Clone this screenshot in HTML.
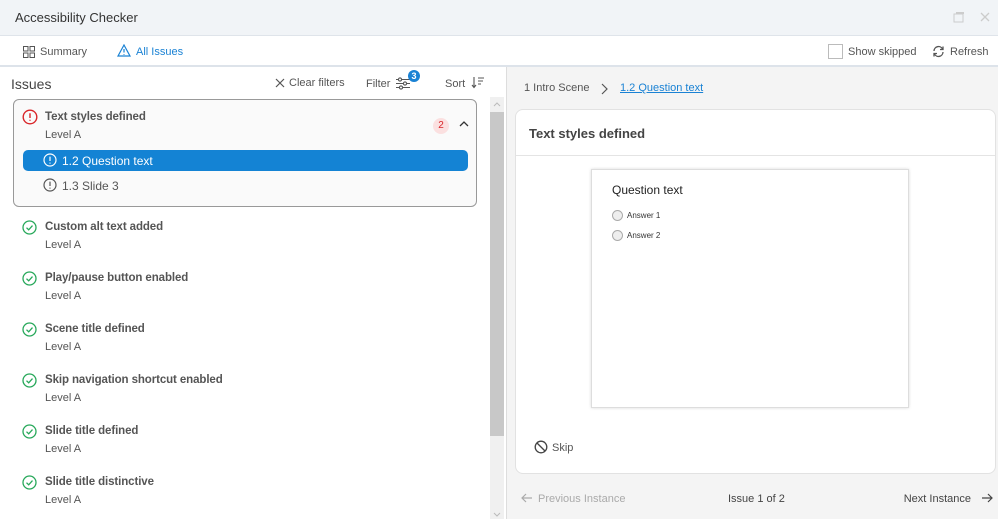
<!DOCTYPE html>
<html><head><style>
*{box-sizing:border-box;margin:0;padding:0}
body{width:998px;height:519px;overflow:hidden;font-family:"Liberation Sans",sans-serif;color:#444;background:#fff;position:relative;font-size:11px}
.abs{position:absolute}
.title{left:0;top:0;width:998px;height:36px;background:#f1f4f7;border-bottom:1px solid #dfe4ea}
.tabs{left:0;top:37px;width:998px;height:30px;background:#fff;border-bottom:2px solid #dde3ea}
.right{left:506px;top:67px;width:492px;height:452px;background:#f4f4f4;border-left:1px solid #ddd}
.b{font-weight:bold;color:#555;letter-spacing:-0.1px;font-size:11.5px}
.lvl{color:#555;font-size:11px}
</style></head><body>
<div class="abs title"><div class="abs" style="left:15px;top:10px;font-size:13px;color:#333">Accessibility Checker</div>
<svg class="abs" style="left:953px;top:11px" width="12" height="12"><rect x="1" y="3" width="9" height="8" fill="none" stroke="#ccc"/><rect x="3" y="1" width="8" height="2" fill="#ccc"/></svg>
<svg class="abs" style="left:980px;top:12px" width="10" height="10"><path d="M1 1L9 9M9 1L1 9" stroke="#ccc" stroke-width="1.3"/></svg>
</div>
<div class="abs tabs">
<svg class="abs" style="left:23px;top:9px" width="12" height="12" fill="none" stroke="#555"><rect x="0.5" y="0.5" width="4.5" height="4.5"/><rect x="7" y="0.5" width="4.5" height="4.5"/><rect x="0.5" y="7" width="4.5" height="4.5"/><rect x="7" y="7" width="4.5" height="4.5"/></svg>
<div class="abs" style="left:40px;top:9px;color:#555">Summary</div>
<svg class="abs" style="left:117px;top:7px" width="14" height="13" fill="none" stroke="#1a82d4" stroke-width="1.2"><path d="M7 1L13 12H1Z"/><path d="M7 5V8.5M7 10v.8"/></svg>
<div class="abs" style="left:136px;top:9px;color:#1a82d4">All Issues</div>
<div class="abs" style="left:828px;top:7px;width:15px;height:15px;border:1px solid #bbb;background:#fff"></div>
<div class="abs" style="left:848px;top:9px;color:#555">Show skipped</div>
<svg class="abs" style="left:932px;top:8px" width="13" height="13" fill="none" stroke="#555" stroke-width="1.3"><path d="M2 6A4.5 4.5 0 0 1 10.5 4M11 7A4.5 4.5 0 0 1 2.5 9"/><path d="M11 1.5V4.5H8M2 11.5V8.5H5"/></svg>
<div class="abs" style="left:950px;top:9px;color:#555">Refresh</div>
</div>
<!-- left -->
<div class="abs" style="left:11px;top:76px;font-size:14px;color:#444">Issues</div>
<svg class="abs" style="left:275px;top:78px" width="10" height="10"><path d="M1 1L9 9M9 1L1 9" stroke="#555" stroke-width="1.2"/></svg>
<div class="abs" style="left:289px;top:77px;color:#555">Clear filters</div>
<div class="abs" style="left:366px;top:78px;color:#555">Filter</div>
<svg class="abs" style="left:395px;top:77px" width="16" height="13" stroke="#555" stroke-width="1.1" fill="#fff"><path d="M1 2.5H15M1 6.5H15M1 10.5H15"/><circle cx="5" cy="2.5" r="1.6"/><circle cx="10" cy="6.5" r="1.6"/><circle cx="6" cy="10.5" r="1.6"/></svg>
<div class="abs" style="left:408px;top:70px;width:12px;height:12px;border-radius:6px;background:#1a82d4;color:#fff;font-size:9px;text-align:center;line-height:12px;font-weight:bold">3</div>
<div class="abs" style="left:445px;top:78px;color:#555">Sort</div>
<svg class="abs" style="left:471px;top:76px" width="14" height="13" stroke="#555" stroke-width="1.1" fill="none"><path d="M3 1V11M1 9L3 11.5L5 9M7 2H13M7 5H12M7 8H10"/></svg>
<div class="abs" style="left:13px;top:99px;width:464px;height:108px;border:1px solid #999;border-radius:6px;background:#fafafa"></div>
<svg class="abs" style="left:22px;top:109px" width="16" height="16" fill="none" stroke="#d9262a" stroke-width="1.4"><circle cx="8" cy="8" r="6.8"/><path d="M8 4.2V9M8 10.8v1"/></svg>
<div class="abs b" style="left:45px;top:111px">Text styles defined</div>
<div class="abs lvl" style="left:45px;top:129px">Level A</div>
<div class="abs" style="left:433px;top:118px;width:16px;height:16px;border-radius:8px;background:#fbe0e0;color:#d9262a;font-size:10px;text-align:center;line-height:16px">2</div>
<svg class="abs" style="left:459px;top:120px" width="10" height="7"><path d="M1 6L5 2L9 6" stroke="#333" stroke-width="1.3" fill="none"/></svg>
<div class="abs" style="left:23px;top:150px;width:445px;height:21px;background:#1483d4;border-radius:5px"></div>
<svg class="abs" style="left:43px;top:153px" width="14" height="14" fill="none" stroke="#fff" stroke-width="1.2"><circle cx="7" cy="7" r="6"/><path d="M7 3.6V8M7 9.6v1"/></svg>
<div class="abs" style="left:62px;top:154px;color:#fff;font-size:12px">1.2 Question text</div>
<svg class="abs" style="left:43px;top:178px" width="14" height="14" fill="none" stroke="#555" stroke-width="1.2"><circle cx="7" cy="7" r="6"/><path d="M7 3.6V8M7 9.6v1"/></svg>
<div class="abs" style="left:62px;top:179px;color:#555;font-size:12px">1.3 Slide 3</div>
<div id="list"></div>
<!-- scrollbar -->
<div class="abs" style="left:490px;top:97px;width:14px;height:422px;background:#f0f0f0"></div>
<div class="abs" style="left:490px;top:112px;width:14px;height:324px;background:#c8c8c8"></div>
<svg class="abs" style="left:493px;top:101px" width="8" height="6"><path d="M1 5L4 2L7 5" stroke="#bbb" fill="none"/></svg>
<svg class="abs" style="left:493px;top:512px" width="8" height="6"><path d="M1 1L4 4L7 1" stroke="#bbb" fill="none"/></svg>
<!-- right -->
<div class="abs right">
<div class="abs" style="left:17px;top:15px;color:#555">1 Intro Scene</div>
<svg class="abs" style="left:93px;top:16px" width="8" height="12"><path d="M2 1L7 6L2 11" stroke="#555" fill="none" stroke-width="1.2"/></svg>
<div class="abs" style="left:113px;top:15px;color:#1a82d4;text-decoration:underline">1.2 Question text</div>
<div class="abs" style="left:8px;top:42px;width:481px;height:365px;background:#fff;border:1px solid #e2e2e2;border-radius:8px">
<div class="abs" style="left:13px;top:16px;font-size:13px;font-weight:bold;color:#444">Text styles defined</div>
<div class="abs" style="left:0;top:45px;width:479px;border-top:1px solid #e4e4e4"></div>
<div class="abs" style="left:75px;top:59px;width:318px;height:239px;border:1px solid #ddd;box-shadow:0 0 3px rgba(0,0,0,.15);background:#fff">
<div class="abs" style="left:20px;top:13px;font-size:12px;color:#222">Question text</div>
<div class="abs" style="left:20px;top:40px;width:11px;height:11px;border-radius:6px;border:1px solid #aaa;background:#eee"></div>
<div class="abs" style="left:35px;top:41px;font-size:8px;color:#333">Answer 1</div>
<div class="abs" style="left:20px;top:60px;width:11px;height:11px;border-radius:6px;border:1px solid #aaa;background:#eee"></div>
<div class="abs" style="left:35px;top:61px;font-size:8px;color:#333">Answer 2</div>
</div>
<svg class="abs" style="left:18px;top:330px" width="14" height="14" fill="none" stroke="#444" stroke-width="1.3"><circle cx="7" cy="7" r="5.8"/><path d="M3 3L11 11"/></svg>
<div class="abs" style="left:36px;top:332px;color:#555">Skip</div>
</div>
<svg class="abs" style="left:14px;top:426px" width="12" height="10" fill="none" stroke="#aaa" stroke-width="1.2"><path d="M11 5H1M5 1L1 5L5 9"/></svg>
<div class="abs" style="left:31px;top:426px;color:#aaa">Previous Instance</div>
<div class="abs" style="left:221px;top:426px;color:#444">Issue 1 of 2</div>
<div class="abs" style="right:27px;top:426px;color:#444">Next Instance</div>
<svg class="abs" style="left:474px;top:426px" width="12" height="10" fill="none" stroke="#444" stroke-width="1.2"><path d="M1 5H11M7 1L11 5L7 9"/></svg>
</div>
<script>
var items=["Custom alt text added","Play/pause button enabled","Scene title defined","Skip navigation shortcut enabled","Slide title defined","Slide title distinctive"];
var h="";items.forEach(function(t,i){var y=220+i*51;
h+='<svg class="abs" style="left:22px;top:'+y+'px" width="15" height="15" fill="none" stroke="#27a85a" stroke-width="1.3"><circle cx="7.5" cy="7.5" r="6.5"/><path d="M4.5 7.7L6.7 9.8L10.5 5.6"/></svg>';
h+='<div class="abs b" style="left:45px;top:'+(y+1)+'px">'+t+'</div><div class="abs lvl" style="left:45px;top:'+(y+19)+'px">Level A</div>';});
document.getElementById("list").innerHTML=h;
</script>
</body></html>
